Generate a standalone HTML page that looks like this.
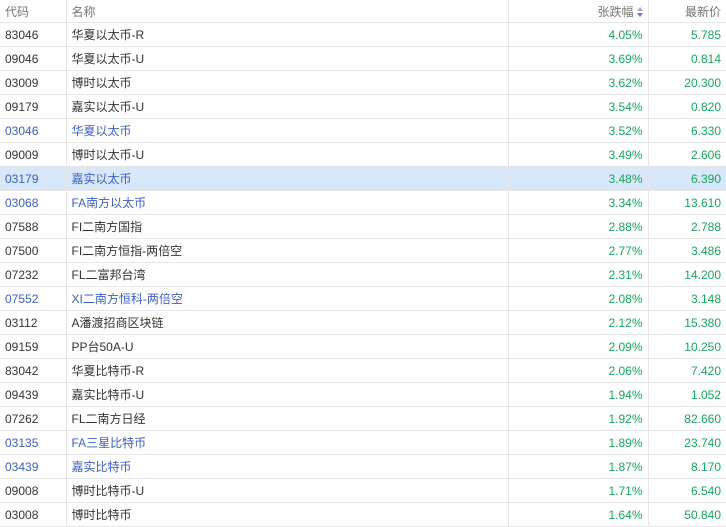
<!DOCTYPE html><html><head><meta charset="utf-8"><style>
body{margin:0;background:#fff;font-family:"Liberation Sans","Noto Sans CJK SC",sans-serif;font-size:12px;color:#333;width:726px;height:523px;overflow:hidden}
table{border-collapse:collapse;width:726px;table-layout:fixed}
td,th{height:23px;border-bottom:1px solid #e6e6e6;padding:0 5px;white-space:nowrap;font-weight:normal}
th{height:22px;color:#777;text-align:left}
td+td,th+th{border-left:1px solid #e6e6e6}
.r{text-align:right}
.g{color:#16a75c}
.b td.c,.b td.n{color:#3b5fc4}
.h td{background:#d8e7f9}
.s{display:inline-block;vertical-align:middle;margin-left:3px;width:6px}
</style></head><body><table>
<colgroup><col style="width:66px"><col style="width:442px"><col style="width:140px"><col style="width:78px"></colgroup>
<tr><th>代码</th><th>名称</th><th class="r">张跌幅<svg class="s" width="6" height="10" viewBox="0 0 6 10"><path d="M0 4L3 0L6 4Z" fill="#aab"/><path d="M0 6L3 10L6 6Z" fill="#5b7fc7"/></svg></th><th class="r">最新价</th></tr>
<tr><td class="c">83046</td><td class="n">华夏以太币-R</td><td class="r g">4.05%</td><td class="r g">5.785</td></tr>
<tr><td class="c">09046</td><td class="n">华夏以太币-U</td><td class="r g">3.69%</td><td class="r g">0.814</td></tr>
<tr><td class="c">03009</td><td class="n">博时以太币</td><td class="r g">3.62%</td><td class="r g">20.300</td></tr>
<tr><td class="c">09179</td><td class="n">嘉实以太币-U</td><td class="r g">3.54%</td><td class="r g">0.820</td></tr>
<tr class="b"><td class="c">03046</td><td class="n">华夏以太币</td><td class="r g">3.52%</td><td class="r g">6.330</td></tr>
<tr><td class="c">09009</td><td class="n">博时以太币-U</td><td class="r g">3.49%</td><td class="r g">2.606</td></tr>
<tr class="b h"><td class="c">03179</td><td class="n">嘉实以太币</td><td class="r g">3.48%</td><td class="r g">6.390</td></tr>
<tr class="b"><td class="c">03068</td><td class="n">FA南方以太币</td><td class="r g">3.34%</td><td class="r g">13.610</td></tr>
<tr><td class="c">07588</td><td class="n">FI二南方国指</td><td class="r g">2.88%</td><td class="r g">2.788</td></tr>
<tr><td class="c">07500</td><td class="n">FI二南方恒指-两倍空</td><td class="r g">2.77%</td><td class="r g">3.486</td></tr>
<tr><td class="c">07232</td><td class="n">FL二富邦台湾</td><td class="r g">2.31%</td><td class="r g">14.200</td></tr>
<tr class="b"><td class="c">07552</td><td class="n">XI二南方恒科-两倍空</td><td class="r g">2.08%</td><td class="r g">3.148</td></tr>
<tr><td class="c">03112</td><td class="n">A潘渡招商区块链</td><td class="r g">2.12%</td><td class="r g">15.380</td></tr>
<tr><td class="c">09159</td><td class="n">PP台50A-U</td><td class="r g">2.09%</td><td class="r g">10.250</td></tr>
<tr><td class="c">83042</td><td class="n">华夏比特币-R</td><td class="r g">2.06%</td><td class="r g">7.420</td></tr>
<tr><td class="c">09439</td><td class="n">嘉实比特币-U</td><td class="r g">1.94%</td><td class="r g">1.052</td></tr>
<tr><td class="c">07262</td><td class="n">FL二南方日经</td><td class="r g">1.92%</td><td class="r g">82.660</td></tr>
<tr class="b"><td class="c">03135</td><td class="n">FA三星比特币</td><td class="r g">1.89%</td><td class="r g">23.740</td></tr>
<tr class="b"><td class="c">03439</td><td class="n">嘉实比特币</td><td class="r g">1.87%</td><td class="r g">8.170</td></tr>
<tr><td class="c">09008</td><td class="n">博时比特币-U</td><td class="r g">1.71%</td><td class="r g">6.540</td></tr>
<tr><td class="c">03008</td><td class="n">博时比特币</td><td class="r g">1.64%</td><td class="r g">50.840</td></tr>
</table></body></html>
